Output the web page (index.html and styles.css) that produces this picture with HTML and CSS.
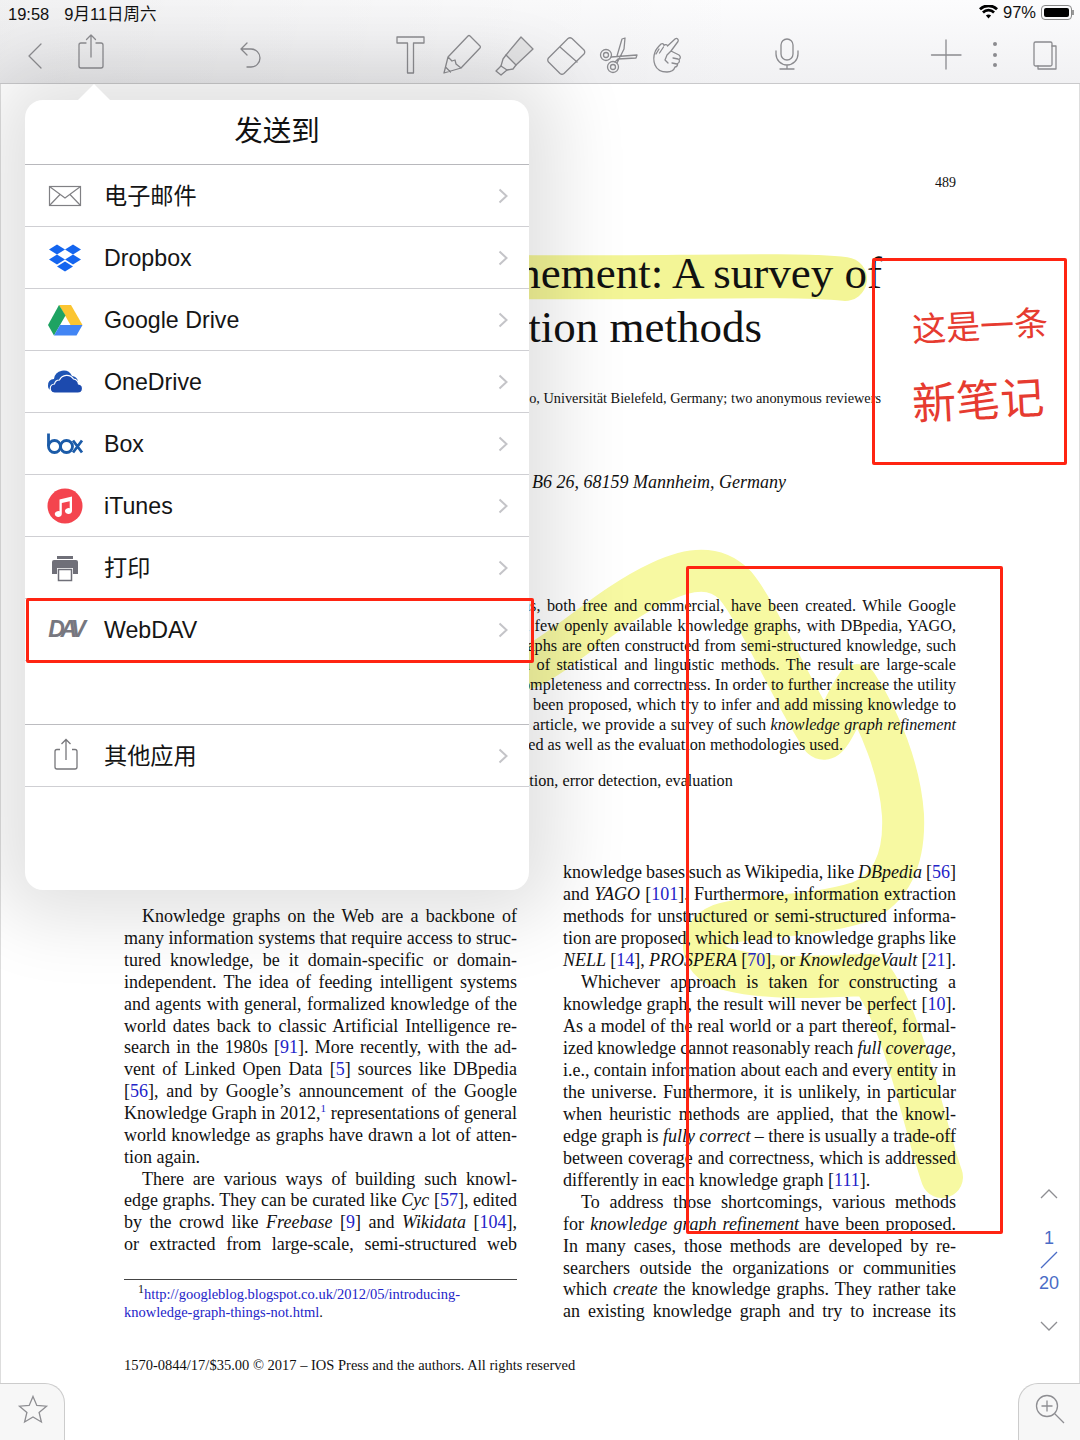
FILE: index.html
```html
<html>
<head>
	<meta charset="utf-8">
	<title>PDF</title>
	<link rel="stylesheet" href="styles.css">
</head>
<body>

<div class="top">
	<div class="status">
		<div class="status-left"><span>19:58</span><span>9月11日周六</span></div>
		<div class="status-right">
			<svg class="wifi" width="19" height="14" viewBox="0 0 19 14"><path d="M9.5 13.5L6.9 10.6a3.8 3.8 0 0 1 5.2 0zM4.9 8.4L3 6.4a9.4 9.4 0 0 1 13 0l-1.9 2a6.6 6.6 0 0 0-9.2 0zM1.9 5.2L0 3.2a13.8 13.8 0 0 1 19 0l-1.9 2a11 11 0 0 0-15.2 0z"/></svg>
			<span>97%</span>
			<span class="batt"><span class="batt-fill"></span></span>
		</div>
	</div>
	<div class="toolbar">
		<div class="group back-group">
			<svg class="ti" viewBox="0 0 40 50"><path d="M26 15L14 27L26 39"/></svg>
			<svg class="ti" viewBox="0 0 40 50"><path d="M15 14H10a2 2 0 0 0-2 2v21a2 2 0 0 0 2 2h20a2 2 0 0 0 2-2V16a2 2 0 0 0-2-2h-5M20 6v22M15.500 10.500L20 6l4.500 4.500"/></svg>
		</div>
		<svg class="ti undo" viewBox="0 0 40 50"><path d="M11 20h10a9 9 0 0 1 0 18h-4M17 14l-6 6 6 6"/></svg>
		<div class="group tools">
			<svg class="ti" viewBox="0 0 40 50"><path d="M7 8H34V14H23.500V44H17.500V14H7Z"/></svg>
			<svg class="ti" viewBox="0 0 40 50"><path d="M2 44L6 28L26 7Q27 6 28 7L38 17Q39 18 38 19L19 39ZM6 28l4 4 3-1 1 4 5 4M3.500 38l5 5"/></svg>
			<svg class="ti" viewBox="0 0 40 50"><path class="fill" d="M27 8L39 20L22 36L12 26Z"/><path d="M12 26L9 30L7 37L2 42L7 46L13 41L19 40L22 36"/><path d="M7 37l6 4"/></svg>
			<svg class="ti" viewBox="0 0 40 50"><path d="M22 9.500Q24 8 26 9.500L38 21Q39.500 23 38 25L18 44.500Q16 46 14 44.500L2.500 33Q1 31 2.500 29ZM14 18L31 33"/></svg>
			<svg class="ti" viewBox="0 0 40 50"><circle cx="8" cy="26" r="5.500"/><circle cx="8" cy="26" r="2.500"/><circle cx="15" cy="38" r="5.500"/><circle cx="15" cy="38" r="2.500"/><path d="M13 28L39 26L38 29L20 30L17 33M19 27L24 10L27 9L26 20L19 34"/></svg>
			<svg class="ti hand" viewBox="0 0 40 50"><path d="M29 10c2-1.500 4 .5 3 2.500L25 22l8 4c2 1.500 1.500 3.500 0 4.500 1 2 0 3.500-1.500 4 .5 2-1 3.500-2.500 3.500-1 3-4 5-8 5-5 0-10-2-12-7-1.500-4-1.500-9 0-13 1-3 4-6 6-8 1.500-1 3 0 3 1.500 1-1.500 3.500-1 3.500.5zM13 20l-3 5M17.500 18l-4 6M25 22l-4 4-2 5 3 3M32 30l-5-1M31 35l-5-1"/></svg>
		</div>
		<svg class="ti mic" viewBox="0 0 40 50"><rect x="14" y="10" width="12" height="21" rx="6"/><path d="M9 22v3a11 11 0 0 0 22 0v-3M20 36v4M13 40h14"/></svg>
		<svg class="ti plus" viewBox="0 0 40 50"><path d="M5.500 26H35M20 11V40"/></svg>
		<svg class="ti dots" viewBox="0 0 40 50"><circle cx="20" cy="15" r="2"/><circle cx="20" cy="26" r="2"/><circle cx="20" cy="36" r="2"/></svg>
		<svg class="ti pages" viewBox="0 0 40 50"><rect x="10" y="13" width="18" height="24" rx="1.500"/><path d="M28 17h4v23H14v-3"/></svg>
	</div>
</div>

<div class="paper">
	<svg class="ink" width="1080" height="1356" viewBox="0 84 1080 1356">
		<path d="M520 277C650 279 790 273 845 279" class="hl1"/>
		<path d="M528 668C565 650 610 605 660 582C690 568 715 565 735 585C760 615 790 690 822 738C830 745 845 700 857 685C880 720 900 770 903 815C905 860 890 890 860 902C810 918 750 915 720 925C695 935 700 965 730 970C780 982 840 975 870 975C905 1020 925 1130 942 1177" class="hl2"/>
	</svg>

	<div class="page-no">489</div>
	<div class="title">
		<div class="t1">nement: A survey of</div>
		<div class="t2">ation methods</div>
	</div>
	<div class="authors">o, Universität Bielefeld, Germany; two anonymous reviewers</div>
	<div class="affil">B6 26, 68159 Mannheim, Germany</div>
	<div class="abstract">
		<span class="ln">hs, both free and commercial, have been created. While Google</span>
		<span class="ln">a few openly available knowledge graphs, with DBpedia, YAGO,</span>
		<span class="ln">raphs are often constructed from semi-structured knowledge, such</span>
		<span class="ln">n of statistical and linguistic methods. The result are large-scale</span>
		<span class="ln">ompleteness and correctness. In order to further increase the utility</span>
		<span class="ln">s been proposed, which try to infer and add missing knowledge to</span>
		<span class="ln">s article, we provide a survey of such <i>knowledge graph refinement</i></span>
		<span class="ln end">sed as well as the evaluation methodologies used.</span>
	</div>
	<div class="keywords">ation, error detection, evaluation</div>

	<div class="cols">
		<div class="col-left">
			<span class="ln ind">Knowledge graphs on the Web are a backbone of</span>
			<span class="ln">many information systems that require access to struc-</span>
			<span class="ln">tured knowledge, be it domain-specific or domain-</span>
			<span class="ln">independent. The idea of feeding intelligent systems</span>
			<span class="ln">and agents with general, formalized knowledge of the</span>
			<span class="ln">world dates back to classic Artificial Intelligence re-</span>
			<span class="ln">search in the 1980s [<a>91</a>]. More recently, with the ad-</span>
			<span class="ln">vent of Linked Open Data [<a>5</a>] sources like DBpedia</span>
			<span class="ln">[<a>56</a>], and by Google’s announcement of the Google</span>
			<span class="ln">Knowledge Graph in 2012,<sup><a>1</a></sup> representations of general</span>
			<span class="ln">world knowledge as graphs have drawn a lot of atten-</span>
			<span class="ln end">tion again.</span>
			<span class="ln ind">There are various ways of building such knowl-</span>
			<span class="ln">edge graphs. They can be curated like <i>Cyc</i> [<a>57</a>], edited</span>
			<span class="ln">by the crowd like <i>Freebase</i> [<a>9</a>] and <i>Wikidata</i> [<a>104</a>],</span>
			<span class="ln">or extracted from large-scale, semi-structured web</span>
			<div class="footnote">
				<div class="fn-first"><sup>1</sup><a>http://googleblog.blogspot.co.uk/2012/05/introducing-</a></div>
				<div><a>knowledge-graph-things-not.html</a>.</div>
			</div>
		</div>
		<div class="col-right">
			<span class="ln tight">knowledge bases such as Wikipedia, like <i>DBpedia</i> [<a>56</a>]</span>
			<span class="ln">and <i>YAGO</i> [<a>101</a>]. Furthermore, information extraction</span>
			<span class="ln">methods for unstructured or semi-structured informa-</span>
			<span class="ln tight">tion are proposed, which lead to knowledge graphs like</span>
			<span class="ln tight"><i>NELL</i> [<a>14</a>], <i>PROSPERA</i> [<a>70</a>], or <i>KnowledgeVault</i> [<a>21</a>].</span>
			<span class="ln ind">Whichever approach is taken for constructing a</span>
			<span class="ln">knowledge graph, the result will never be perfect [<a>10</a>].</span>
			<span class="ln">As a model of the real world or a part thereof, formal-</span>
			<span class="ln tight">ized knowledge cannot reasonably reach <i>full coverage</i>,</span>
			<span class="ln tight">i.e., contain information about each and every entity in</span>
			<span class="ln">the universe. Furthermore, it is unlikely, in particular</span>
			<span class="ln">when heuristic methods are applied, that the knowl-</span>
			<span class="ln tight">edge graph is <i>fully correct</i> – there is usually a trade-off</span>
			<span class="ln">between coverage and correctness, which is addressed</span>
			<span class="ln end">differently in each knowledge graph [<a>111</a>].</span>
			<span class="ln ind">To address those shortcomings, various methods</span>
			<span class="ln">for <i>knowledge graph refinement</i> have been proposed.</span>
			<span class="ln">In many cases, those methods are developed by re-</span>
			<span class="ln">searchers outside the organizations or communities</span>
			<span class="ln">which <i>create</i> the knowledge graphs. They rather take</span>
			<span class="ln">an existing knowledge graph and try to increase its</span>
		</div>
	</div>
	<div class="copyright">1570-0844/17/$35.00 © 2017 – IOS Press and the authors. All rights reserved</div>
</div>

<!-- send to popover -->
<div class="arrow"></div>
<div class="popover">
	<div class="pop-title">发送到</div>
	<div class="row">
		<svg class="ri" viewBox="0 0 40 40"><g class="mail"><rect x="4.500" y="10.500" width="31" height="19"/><path d="M4.500 10.500L20 22L35.500 10.500M4.500 29.500L15 18.500M35.500 29.500L25 18.500"/></g></svg>
		<span class="row-text cjk">电子邮件</span>
		<svg class="chev" viewBox="0 0 10 16"><path d="M1.500 1.500L8.500 8L1.500 14.500"/></svg>
	</div>
	<div class="row">
		<svg class="ri" viewBox="0 0 40 40"><path class="dbx" d="M12 6.500L20 11.500L12 16.500L4 11.500ZM28 6.500L36 11.500L28 16.500L20 11.500ZM12 16.500L20 21.500L12 26.500L4 21.500ZM28 16.500L36 21.500L28 26.500L20 21.500ZM20 23.500L28 28.500L20 33.500L12 28.500Z"/></svg>
		<span class="row-text">Dropbox</span>
		<svg class="chev" viewBox="0 0 10 16"><path d="M1.500 1.500L8.500 8L1.500 14.500"/></svg>
	</div>
	<div class="row">
		<svg class="ri" viewBox="0 0 40 40"><path fill="#fbc531" d="M14 5H26L37.500 25H25.500Z"/><path fill="#1ea362" d="M14 5L3 25L9 35.500L20.500 15.500Z"/><path fill="#4285f4" d="M9 35.500L15 25H37.500L31.500 35.500Z"/></svg>
		<span class="row-text">Google Drive</span>
		<svg class="chev" viewBox="0 0 10 16"><path d="M1.500 1.500L8.500 8L1.500 14.500"/></svg>
	</div>
	<div class="row">
		<svg class="ri" viewBox="0 0 40 40"><path fill="#1f55b5" d="M3 24a6 6 0 0 1 6-7a9.500 9.500 0 0 1 18-3a7 7 0 0 1 6 5l-18 9H7q-4 0-4-4z"/><path fill="#1c4aae" stroke="#fff" stroke-width="1.200" d="M10 31a4.500 4.500 0 0 1-.5-9a5 5 0 0 1 5-4a8 8 0 0 1 14-1a6 6 0 0 1 5 5a4.500 4.500 0 0 1 4 4.500q0 4.500-4.500 4.500z"/></svg>
		<span class="row-text">OneDrive</span>
		<svg class="chev" viewBox="0 0 10 16"><path d="M1.500 1.500L8.500 8L1.500 14.500"/></svg>
	</div>
	<div class="row">
		<svg class="ri" viewBox="0 0 40 40"><g class="boxlogo"><path d="M3.500 9.500V22"/><circle cx="9.500" cy="22.500" r="6"/><circle cx="21.500" cy="22.500" r="6"/><path d="M28 16.500L37 28.500M37 16.500L28 28.500"/></g></svg>
		<span class="row-text">Box</span>
		<svg class="chev" viewBox="0 0 10 16"><path d="M1.500 1.500L8.500 8L1.500 14.500"/></svg>
	</div>
	<div class="row">
		<svg class="ri" viewBox="0 0 40 40"><circle cx="20" cy="20" r="17.500" fill="#f4444e"/><path fill="#fff" d="M14.500 13.500L27 10.500V25a3.500 3 0 1 1-2.300-2.800V15.200L16.800 17V28a3.500 3 0 1 1-2.300-2.800Z"/></svg>
		<span class="row-text">iTunes</span>
		<svg class="chev" viewBox="0 0 10 16"><path d="M1.500 1.500L8.500 8L1.500 14.500"/></svg>
	</div>
	<div class="row">
		<svg class="ri" viewBox="0 0 40 40"><path fill="#6f6f78" d="M12 8h16v3H12zM9 12h22a2 2 0 0 1 2 2v12H28v-6H12v6H7V14a2 2 0 0 1 2-2z"/><rect x="13.500" y="21.500" width="13" height="11" fill="#fff" stroke="#6f6f78" stroke-width="1.500"/></svg>
		<span class="row-text cjk">打印</span>
		<svg class="chev" viewBox="0 0 10 16"><path d="M1.500 1.500L8.500 8L1.500 14.500"/></svg>
	</div>
	<div class="row">
		<span class="dav">DAV</span>
		<span class="row-text">WebDAV</span>
		<svg class="chev" viewBox="0 0 10 16"><path d="M1.500 1.500L8.500 8L1.500 14.500"/></svg>
	</div>
	<div class="row row-other">
		<svg class="ri" viewBox="0 0 40 40"><g class="shareic"><path d="M15 13.500h-3a2 2 0 0 0-2 2V31a2 2 0 0 0 2 2h18a2 2 0 0 0 2-2V15.500a2 2 0 0 0-2-2h-3M21 3.500V24M16.500 8L21 3.500L25.500 8"/></g></svg>
		<span class="row-text cjk">其他应用</span>
		<svg class="chev" viewBox="0 0 10 16"><path d="M1.500 1.500L8.500 8L1.500 14.500"/></svg>
	</div>
</div>

<!-- red boxes drawn on the page -->
<div class="mark mark-dav"></div>
<div class="mark mark-big"></div>
<div class="mark mark-note">
	<div class="hand1">这是一条</div>
	<div class="hand2">新笔记</div>
</div>

<div class="pager">
	<svg class="pg-chev" viewBox="0 0 18 10"><path d="M1 9L9 1L17 9"/></svg>
	<div class="pg-num">1</div>
	<svg class="pg-slash" viewBox="0 0 18 18"><path d="M1 17L17 1"/></svg>
	<div class="pg-num">20</div>
	<svg class="pg-chev pg-down" viewBox="0 0 18 10"><path d="M1 1L9 9L17 1"/></svg>
</div>

<div class="corner corner-left">
	<svg width="32" height="32" viewBox="0 0 32 32"><path d="M16 3.500L19.800 12.400L29.500 13.200L22.100 19.500L24.400 29L16 24L7.600 29L9.900 19.500L2.500 13.200L12.200 12.400Z"/></svg>
</div>
<div class="corner corner-right">
	<svg width="32" height="32" viewBox="0 0 32 32"><circle cx="13" cy="13" r="10.500"/><path d="M13 7.500v11M7.500 13h11M20.500 20.500L30 30"/></svg>
</div>

</body>
</html>
```

FILE: styles.css
```css
body {
	margin: 0;
	width: 1080px;
	height: 1440px;
	overflow: hidden;
	position: relative;
	background: #fff;
	font-family: "Liberation Serif", serif;
	color: #111;
}

/* status bar + toolbar */
.top {
	height: 83px;
	border-bottom: 1px solid #c9c9cb;
	background: linear-gradient(to right, rgba(0,0,0,.045), rgba(0,0,0,0) 70%), linear-gradient(#fcfcfd, #f1f1f3);
}
.status {
	height: 25px;
	display: flex;
	justify-content: space-between;
	align-items: center;
	padding: 0 8px;
	font: 16.500px "Liberation Sans", "Noto Sans CJK SC", sans-serif;
	color: #111;
}
.status-left span { margin-right: 15px; }
.status-right { display: flex; align-items: center; gap: 5px; }
.wifi { fill: #000; margin-top: -1px; }
.batt {
	width: 31px;
	height: 15px;
	box-sizing: border-box;
	border: 1px solid #888;
	border-radius: 4px;
	padding: 2px;
	display: flex;
	position: relative;
}
.batt:after {
	content: "";
	position: absolute;
	right: -3px;
	top: 4px;
	width: 2px;
	height: 5px;
	background: #999;
}
.batt-fill {
	flex: 1;
	background: #000;
	border-radius: 2px;
}

.toolbar {
	display: flex;
	padding: 4px 0 0 15px;
}
.group { display: flex; }
.ti {
	width: 40px;
	height: 50px;
	flex: none;
	fill: none;
	stroke: #8b8b8f;
	stroke-width: 1.300;
	stroke-linejoin: round;
	stroke-linecap: round;
}
.ti .fill { fill: #e4e4e5; }
.back-group { gap: 16px; }
.undo { margin-left: 119px; }
.tools { margin-left: 120px; gap: 12px; }
.hand { margin-left: -4px; }
.mic { margin-left: 81px; }
.plus { margin-left: 119px; }
.dots { margin-left: 9px; fill: #8b8b8f; stroke: none; }
.pages { margin-left: 9px; }

/* the pdf page */
.paper {
	position: relative;
	height: 1356px;
	padding: 0 123px;
	box-sizing: border-box;
	border-left: 1px solid #ddd;
	border-right: 1px solid #ddd;
	overflow: hidden;
}
.paper > div { position: relative; }
.ink {
	position: absolute;
	left: -1px;
	top: 0;
}
.hl1, .hl2 {
	fill: none;
	stroke-linecap: round;
	stroke-linejoin: round;
}
.hl1 { stroke: #f3f596; stroke-width: 44px; }
.hl2 { stroke: #f7f9a2; stroke-width: 42px; }

.page-no {
	margin-top: 91px;
	font-size: 14px;
	line-height: 16px;
	text-align: right;
}
.title {
	margin-top: 55px;
	font-size: 45px;
	line-height: 54px;
	text-align: right;
}
.t1 { padding-right: 74px; }
.t2 { padding-right: 194px; }
.authors {
	margin-top: 34px;
	font-size: 14.300px;
	line-height: 20px;
	text-align: right;
	padding-right: 75px;
}
.affil {
	margin-top: 63px;
	margin-left: 408px;
	font-size: 18px;
	line-height: 22px;
	font-style: italic;
}
.abstract {
	margin-top: 104px;
	margin-left: 398px;
	font-size: 16.200px;
	line-height: 19.800px;
	word-spacing: -1.500px;
}
.keywords {
	margin-top: 16px;
	margin-left: 398px;
	font-size: 16.200px;
	line-height: 20px;
}
.ln {
	display: block;
	text-align: justify;
	text-align-last: justify;
}
.ln.end { text-align-last: left; word-spacing: 0; }
.ln.ind { padding-left: 18px; }
.ln.tight { word-spacing: -2px; }
.ln sup { font-size: 11px; line-height: 0; }
a { color: #2323c8; }

.cols {
	margin-top: 71px;
	display: grid;
	grid-template-columns: 393px 393px;
	column-gap: 46px;
	font-size: 18px;
}
.col-left { padding-top: 44px; line-height: 21.850px; }
.col-right { line-height: 21.950px; }
.footnote {
	margin-top: 23px;
	border-top: 1px solid #444;
	padding-top: 5px;
	font-size: 14.500px;
	line-height: 18px;
}
.fn-first { padding-left: 14px; }
.footnote sup { font-size: 12px; line-height: 0; }
.copyright {
	margin-top: 32px;
	font-size: 14.500px;
	line-height: 20px;
}

/* popover */
.popover {
	position: absolute;
	left: 25px;
	top: 100px;
	width: 504px;
	height: 790px;
	background: #fff;
	border-radius: 18px;
	box-shadow: 0 0 75px 28px rgba(0,0,0,.12);
	font-family: "Liberation Sans", "Noto Sans CJK SC", sans-serif;
}
.arrow {
	position: absolute;
	left: 78px;
	top: 84px;
	border-left: 16px solid transparent;
	border-right: 16px solid transparent;
	border-bottom: 16px solid #fff;
	z-index: 2;
}
.pop-title {
	height: 64px;
	border-bottom: 1px solid #b8b8bc;
	text-align: center;
	font-size: 28.500px;
	line-height: 62px;
	color: #111;
}
.row {
	height: 61px;
	border-bottom: 1px solid #cfcfd3;
	display: flex;
	align-items: center;
	padding: 0 21px 0 20px;
}
.row-other {
	margin-top: 63px;
	border-top: 1px solid #bcbcc0;
}
.ri {
	width: 40px;
	height: 40px;
	flex: none;
}
.row-text {
	margin-left: 19px;
	padding-top: 2px;
	flex: 1;
	font-size: 23.200px;
	color: #151515;
}
.row-text.cjk {
	padding-top: 0;
	margin-top: -3px;
}
.chev {
	width: 10px;
	height: 16px;
	fill: none;
	stroke: #c4c4c8;
	stroke-width: 2;
	flex: none;
}
.mail { fill: none; stroke: #808084; stroke-width: 1.200; }
.dbx { fill: #1465ef; }
.boxlogo { fill: none; stroke: #1b5ba8; stroke-width: 2.800; }
.shareic { fill: none; stroke: #77777b; stroke-width: 1.300; }
.dav {
	width: 40px;
	flex: none;
	text-align: center;
	font-size: 23px;
	font-weight: bold;
	font-style: italic;
	letter-spacing: -4.500px;
	color: #77777f;
}

/* red rectangles */
.mark {
	position: absolute;
	border: 3px solid #ff2412;
	border-radius: 2px;
	box-sizing: border-box;
	z-index: 3;
}
.mark-dav { left: 26px; top: 598px; width: 508px; height: 65px; }
.mark-big { left: 686px; top: 566px; width: 317px; height: 668px; }
.mark-note {
	left: 872px;
	top: 258px;
	width: 195px;
	height: 207px;
	color: #e63b30;
	font-family: "Noto Sans CJK SC", sans-serif;
	padding: 40px 0 0 37px;
}
.hand1 {
	font-size: 34px;
	line-height: 46px;
	transform: rotate(-3deg);
	white-space: nowrap;
}
.hand2 {
	font-size: 44px;
	line-height: 62px;
	margin-top: 19px;
	transform: rotate(-3deg);
	white-space: nowrap;
}

/* page indicator */
.pager {
	position: absolute;
	left: 1029px;
	top: 1189px;
	width: 40px;
	display: flex;
	flex-direction: column;
	align-items: center;
	color: #4a6cc6;
	font: 18px "Liberation Sans", sans-serif;
}
.pg-chev {
	width: 18px;
	height: 10px;
	fill: none;
	stroke: #8e8e92;
	stroke-width: 1.300;
}
.pg-down { margin-top: 28px; }
.pg-num { line-height: 20px; }
.pg-chev + .pg-num { margin-top: 29px; }
.pg-slash {
	width: 18px;
	height: 18px;
	margin: 3px 0 4px;
	fill: none;
	stroke: #4a6cc6;
	stroke-width: 1.300;
}

/* bottom corner buttons */
.corner {
	position: absolute;
	top: 1383px;
	width: 65px;
	height: 57px;
	background: #f7f7f7;
	border: 1px solid #ccc;
	box-sizing: border-box;
	padding-top: 9px;
	z-index: 2;
}
.corner svg { fill: none; stroke: #8e8e92; stroke-width: 1.300; }
.corner-left {
	left: 0;
	border-width: 1px 1px 0 0;
	border-radius: 0 20px 0 0;
	padding-left: 17px;
}
.corner-right {
	right: 0;
	width: 62px;
	border-width: 1px 0 0 1px;
	border-radius: 20px 0 0 0;
	padding-left: 15px;
}
```
